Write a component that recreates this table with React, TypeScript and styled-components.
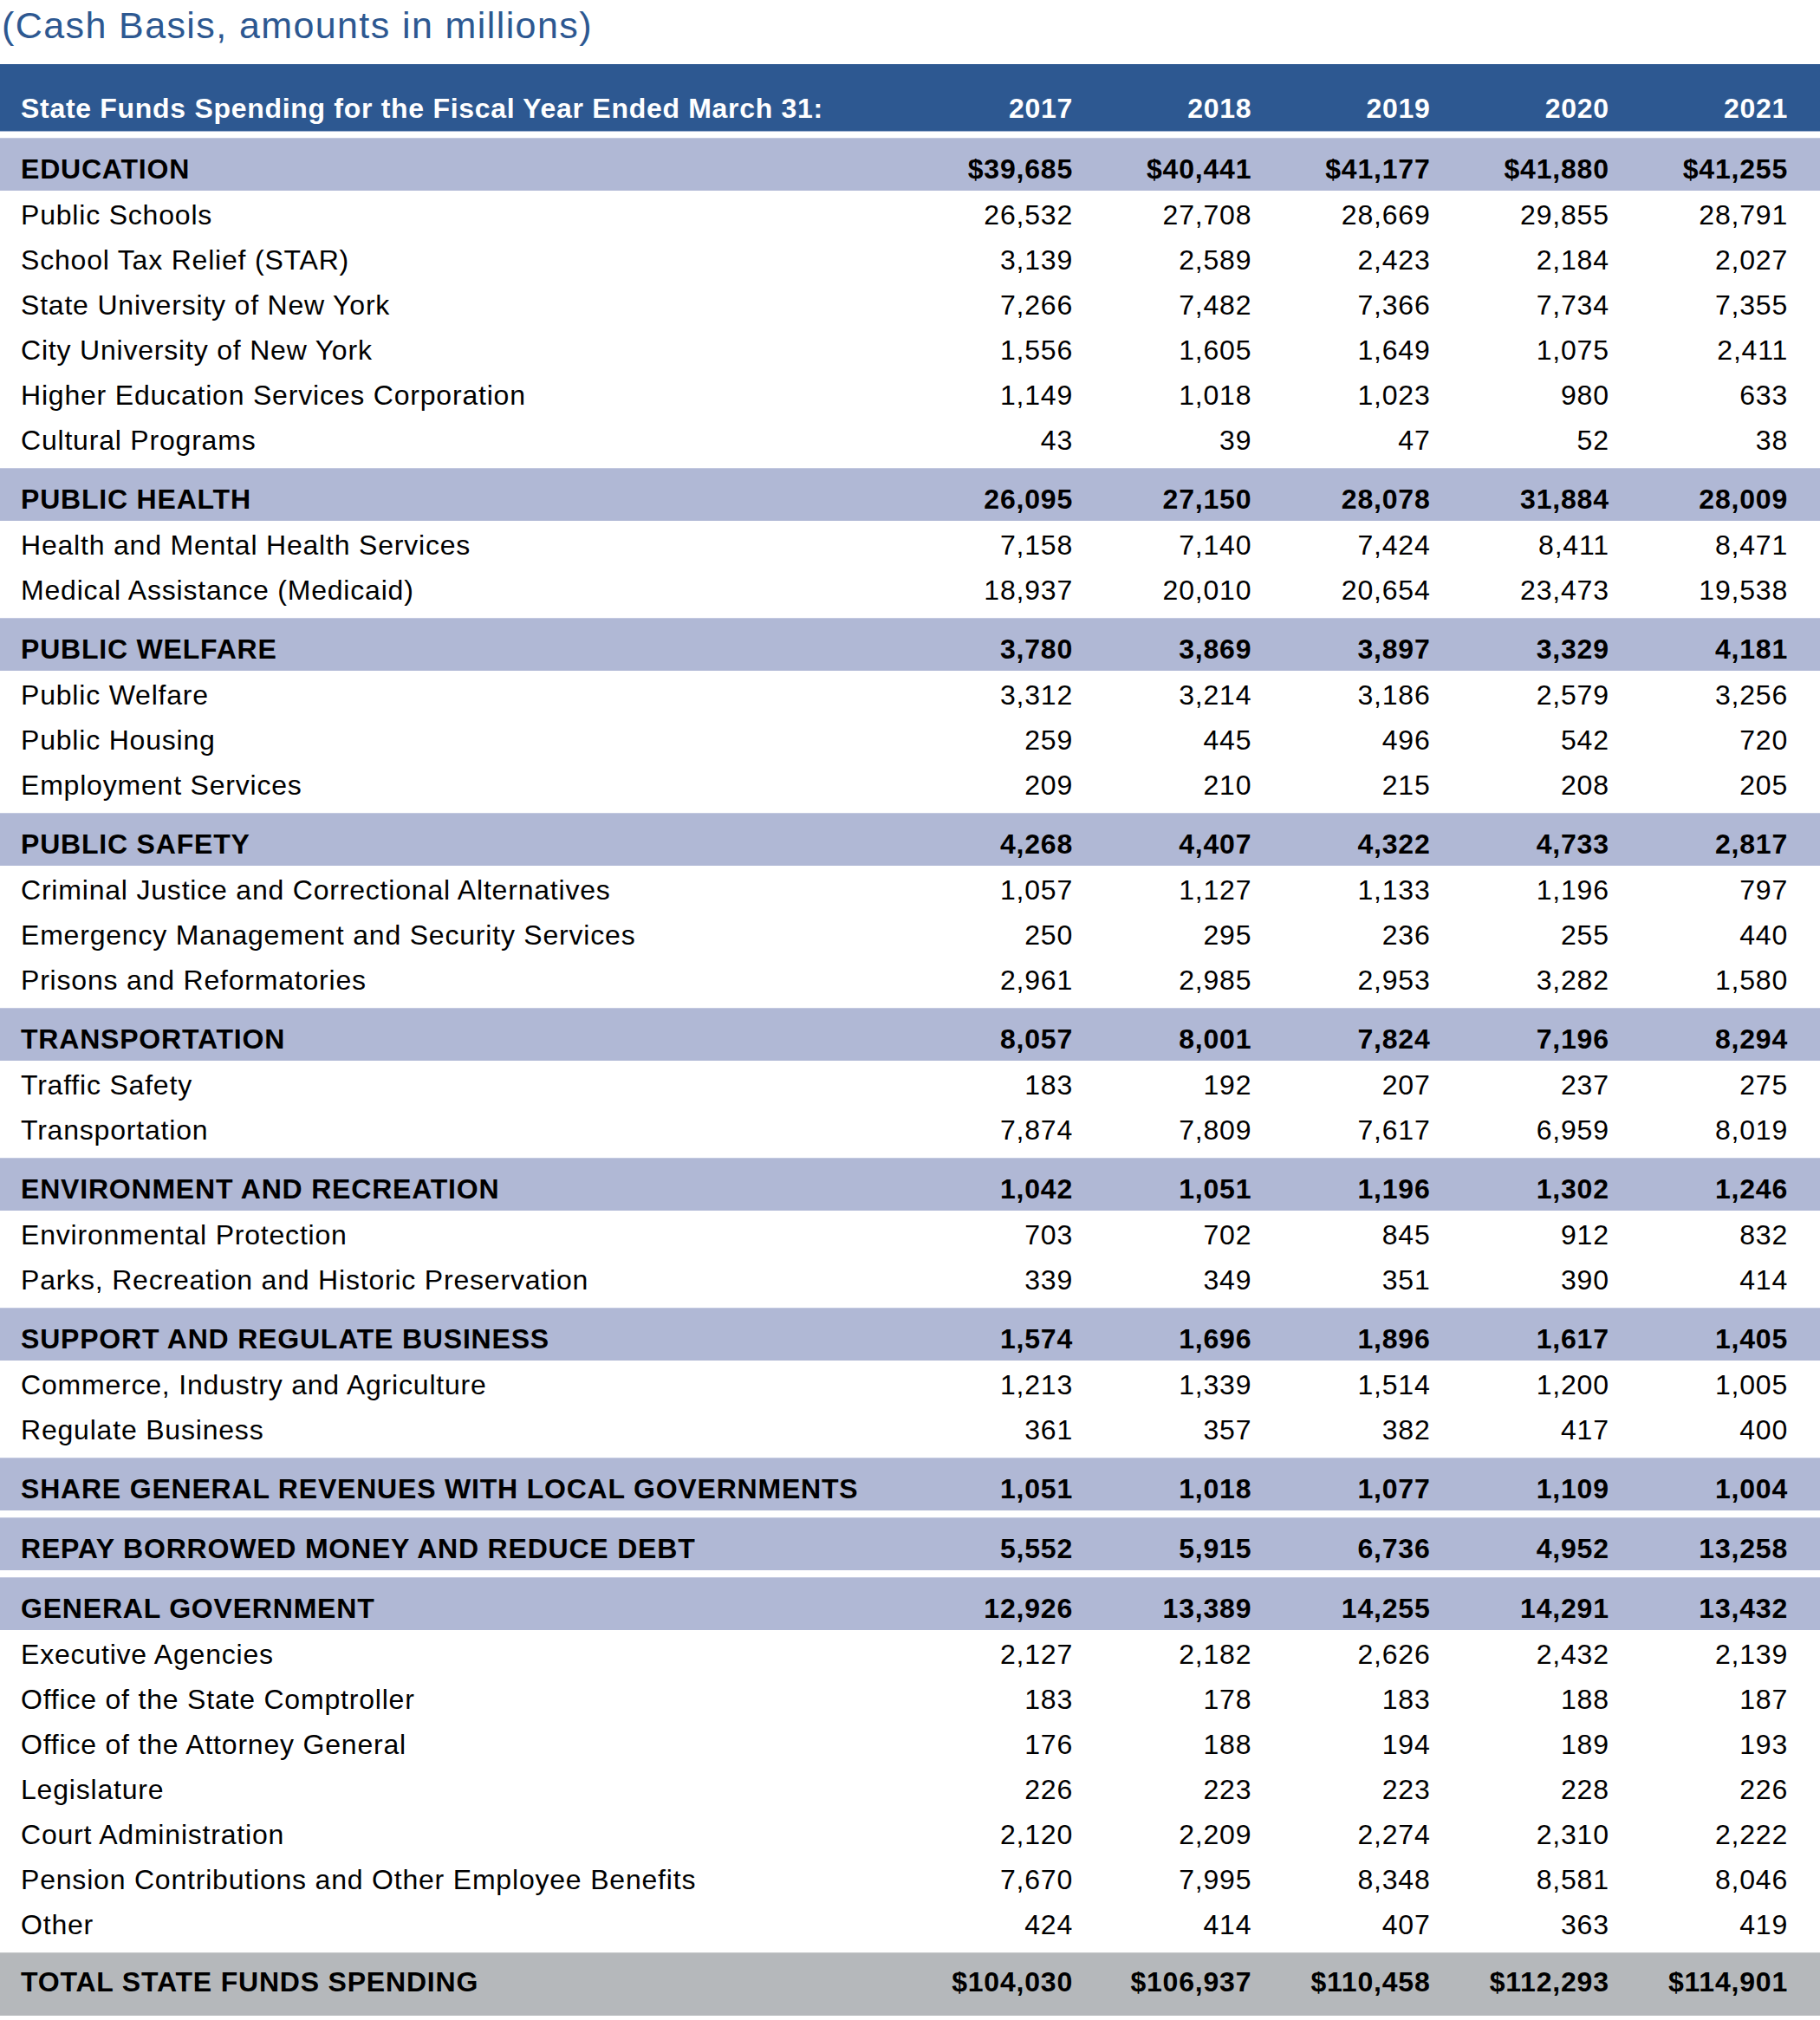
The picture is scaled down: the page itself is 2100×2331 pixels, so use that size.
import React from "react";
import styled, { createGlobalStyle } from "styled-components";

const GlobalStyle = createGlobalStyle`
  html, body {
    margin: 0;
    padding: 0;
    background: #ffffff;
  }
  body {
    font-family: "Liberation Sans", Arial, Helvetica, sans-serif;
    color: #000;
  }
  * { box-sizing: border-box; }
`;

type Group = {
  name: string;
  totals: string[];
  rows: { label: string; values: string[] }[];
};

const YEARS = ["2017", "2018", "2019", "2020", "2021"];

const GROUPS: Group[] = [
  {
    name: "EDUCATION",
    totals: ["$39,685", "$40,441", "$41,177", "$41,880", "$41,255"],
    rows: [
      { label: "Public Schools", values: ["26,532", "27,708", "28,669", "29,855", "28,791"] },
      { label: "School Tax Relief (STAR)", values: ["3,139", "2,589", "2,423", "2,184", "2,027"] },
      { label: "State University of New York", values: ["7,266", "7,482", "7,366", "7,734", "7,355"] },
      { label: "City University of New York", values: ["1,556", "1,605", "1,649", "1,075", "2,411"] },
      { label: "Higher Education Services Corporation", values: ["1,149", "1,018", "1,023", "980", "633"] },
      { label: "Cultural Programs", values: ["43", "39", "47", "52", "38"] },
    ],
  },
  {
    name: "PUBLIC HEALTH",
    totals: ["26,095", "27,150", "28,078", "31,884", "28,009"],
    rows: [
      { label: "Health and Mental Health Services", values: ["7,158", "7,140", "7,424", "8,411", "8,471"] },
      { label: "Medical Assistance (Medicaid)", values: ["18,937", "20,010", "20,654", "23,473", "19,538"] },
    ],
  },
  {
    name: "PUBLIC WELFARE",
    totals: ["3,780", "3,869", "3,897", "3,329", "4,181"],
    rows: [
      { label: "Public Welfare", values: ["3,312", "3,214", "3,186", "2,579", "3,256"] },
      { label: "Public Housing", values: ["259", "445", "496", "542", "720"] },
      { label: "Employment Services", values: ["209", "210", "215", "208", "205"] },
    ],
  },
  {
    name: "PUBLIC SAFETY",
    totals: ["4,268", "4,407", "4,322", "4,733", "2,817"],
    rows: [
      { label: "Criminal Justice and Correctional Alternatives", values: ["1,057", "1,127", "1,133", "1,196", "797"] },
      { label: "Emergency Management and Security Services", values: ["250", "295", "236", "255", "440"] },
      { label: "Prisons and Reformatories", values: ["2,961", "2,985", "2,953", "3,282", "1,580"] },
    ],
  },
  {
    name: "TRANSPORTATION",
    totals: ["8,057", "8,001", "7,824", "7,196", "8,294"],
    rows: [
      { label: "Traffic Safety", values: ["183", "192", "207", "237", "275"] },
      { label: "Transportation", values: ["7,874", "7,809", "7,617", "6,959", "8,019"] },
    ],
  },
  {
    name: "ENVIRONMENT AND RECREATION",
    totals: ["1,042", "1,051", "1,196", "1,302", "1,246"],
    rows: [
      { label: "Environmental Protection", values: ["703", "702", "845", "912", "832"] },
      { label: "Parks, Recreation and Historic Preservation", values: ["339", "349", "351", "390", "414"] },
    ],
  },
  {
    name: "SUPPORT AND REGULATE BUSINESS",
    totals: ["1,574", "1,696", "1,896", "1,617", "1,405"],
    rows: [
      { label: "Commerce, Industry and Agriculture", values: ["1,213", "1,339", "1,514", "1,200", "1,005"] },
      { label: "Regulate Business", values: ["361", "357", "382", "417", "400"] },
    ],
  },
  {
    name: "SHARE GENERAL REVENUES WITH LOCAL GOVERNMENTS",
    totals: ["1,051", "1,018", "1,077", "1,109", "1,004"],
    rows: [],
  },
  {
    name: "REPAY BORROWED MONEY AND REDUCE DEBT",
    totals: ["5,552", "5,915", "6,736", "4,952", "13,258"],
    rows: [],
  },
  {
    name: "GENERAL GOVERNMENT",
    totals: ["12,926", "13,389", "14,255", "14,291", "13,432"],
    rows: [
      { label: "Executive Agencies", values: ["2,127", "2,182", "2,626", "2,432", "2,139"] },
      { label: "Office of the State Comptroller", values: ["183", "178", "183", "188", "187"] },
      { label: "Office of the Attorney General", values: ["176", "188", "194", "189", "193"] },
      { label: "Legislature", values: ["226", "223", "223", "228", "226"] },
      { label: "Court Administration", values: ["2,120", "2,209", "2,274", "2,310", "2,222"] },
      { label: "Pension Contributions and Other Employee Benefits", values: ["7,670", "7,995", "8,348", "8,581", "8,046"] },
      { label: "Other", values: ["424", "414", "407", "363", "419"] },
    ],
  },
];

const TOTAL = ["$104,030", "$106,937", "$110,458", "$112,293", "$114,901"];

const Page = styled.div`
  width: 2100px;
  font-family: "Liberation Sans", Arial, Helvetica, sans-serif;
`;

const Title = styled.h1`
  margin: 0 0 16px 0;
  padding-left: 2px;
  font-size: 43px;
  line-height: 58px;
  font-weight: 400;
  letter-spacing: 1.4px;
  color: #2d5891;
`;

const Table = styled.div`
  display: flex;
  flex-direction: column;
  gap: 8px;
`;

const Grid = styled.div`
  display: grid;
  grid-template-columns: 1fr repeat(5, 206.25px);
  padding: 0 37px 0 24px;
  font-size: 32px;
  line-height: 32px;
  letter-spacing: 0.8px;
  white-space: nowrap;
`;

const HeaderRow = styled(Grid)`
  height: 77px;
  align-items: end;
  padding-bottom: 10px;
  background: #2d5891;
  color: #ffffff;
  font-weight: 700;
  letter-spacing: 0.7px;
  box-shadow: 0 1px 0 #9fb1cf;
`;

const BandRow = styled(Grid)<{ $tone: "section" | "total" }>`
  height: ${(p) => (p.$tone === "total" ? "73px" : "61px")};
  padding-top: ${(p) => (p.$tone === "total" ? "17px" : "19px")};
  background: ${(p) => (p.$tone === "total" ? "#b5b8bb" : "#b0b8d5")};
  border-top: 1px solid ${(p) => (p.$tone === "total" ? "#c4c7c9" : "#c3c9e0")};
  font-weight: 700;
  color: #000;
`;

const DataRow = styled(Grid)`
  height: 52px;
  padding-top: 12px;
  font-weight: 400;
  color: #000;
`;

const GroupBlock = styled.section`
  display: flex;
  flex-direction: column;
`;

const Label = styled.div`
  text-align: left;
`;

const Num = styled.div`
  text-align: right;
`;

export default function App() {
  return (
    <Page>
      <GlobalStyle />
      <Title>(Cash Basis, amounts in millions)</Title>
      <Table>
        <HeaderRow>
          <Label>State Funds Spending for the Fiscal Year Ended March 31:</Label>
          {YEARS.map((y) => (
            <Num key={y}>{y}</Num>
          ))}
        </HeaderRow>
        {GROUPS.map((g) => (
          <GroupBlock key={g.name}>
            <BandRow $tone="section">
              <Label>{g.name}</Label>
              {g.totals.map((v, i) => (
                <Num key={i}>{v}</Num>
              ))}
            </BandRow>
            {g.rows.map((r) => (
              <DataRow key={r.label}>
                <Label>{r.label}</Label>
                {r.values.map((v, i) => (
                  <Num key={i}>{v}</Num>
                ))}
              </DataRow>
            ))}
          </GroupBlock>
        ))}
        <BandRow $tone="total">
          <Label>TOTAL STATE FUNDS SPENDING</Label>
          {TOTAL.map((v, i) => (
            <Num key={i}>{v}</Num>
          ))}
        </BandRow>
      </Table>
    </Page>
  );
}
